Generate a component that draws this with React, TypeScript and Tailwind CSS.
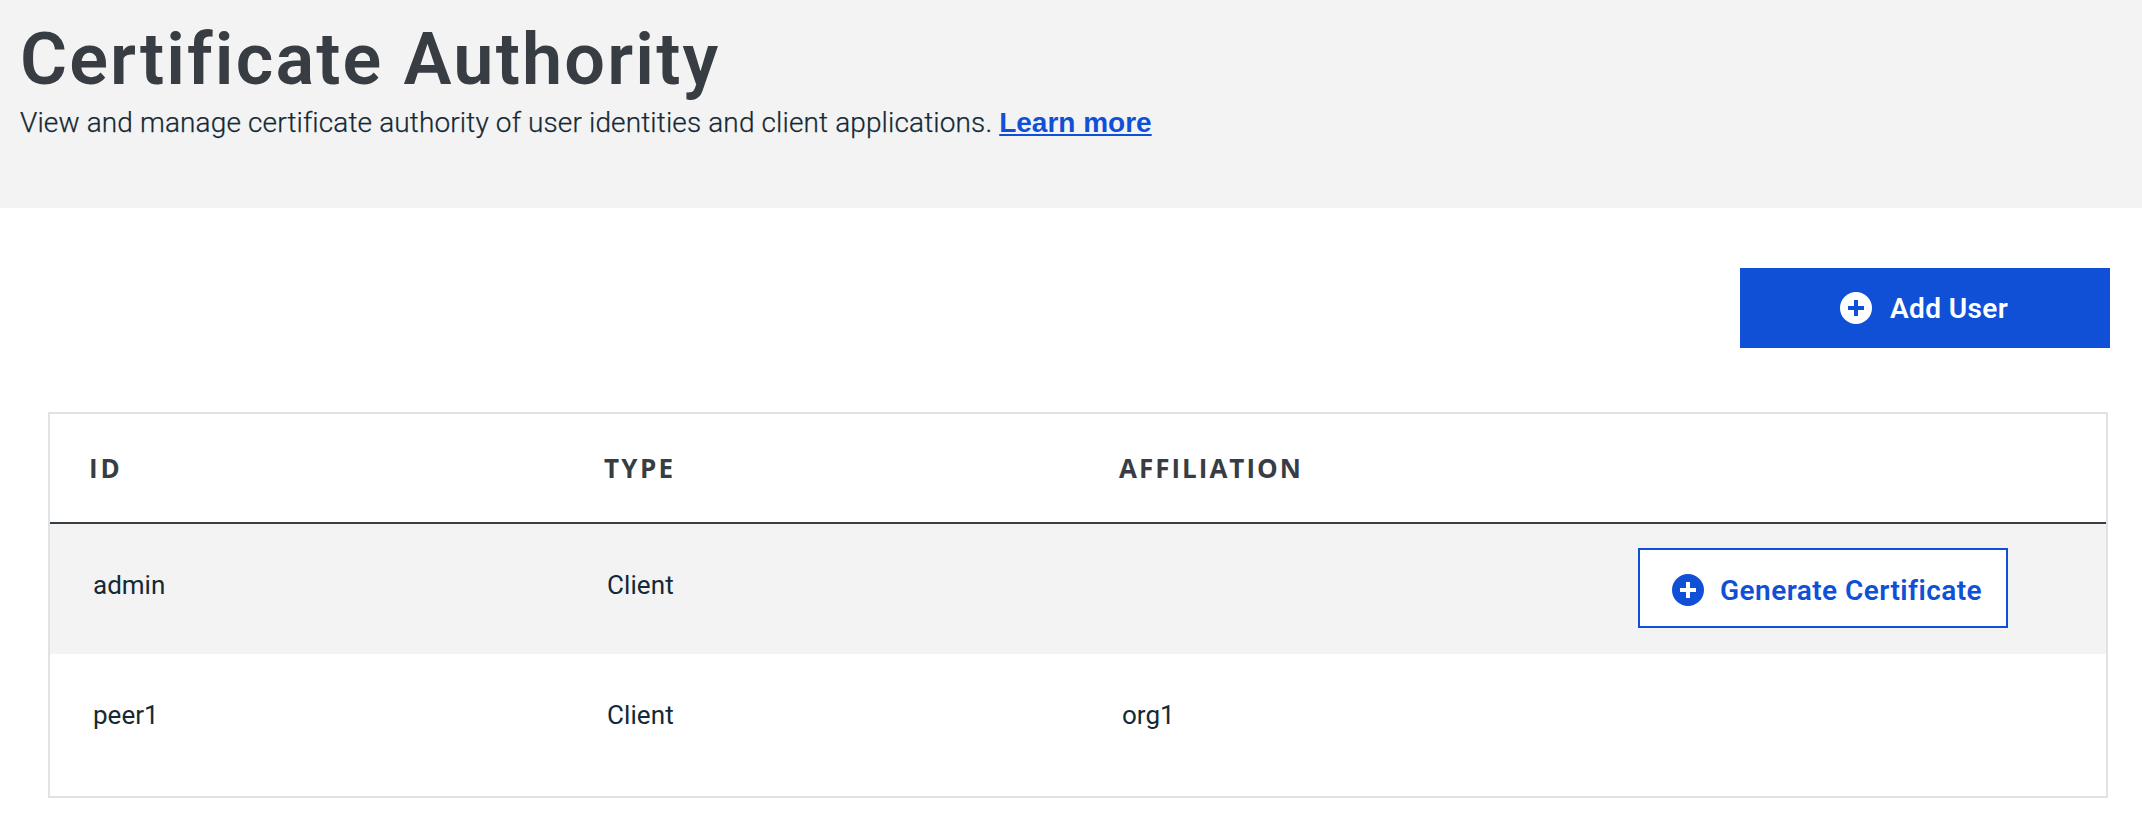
type User = { id: string; type: string; affiliation: string; canGenerate: boolean };

const users: User[] = [
  { id: 'admin', type: 'Client', affiliation: '', canGenerate: true },
  { id: 'peer1', type: 'Client', affiliation: 'org1', canGenerate: false },
];

function PlusIcon() {
  return (
    <svg viewBox="0 0 16 16" className="size-8 shrink-0" fill="currentColor" aria-hidden="true">
      <path
        fillRule="evenodd"
        d="M8 0a8 8 0 1 1 0 16A8 8 0 0 1 8 0ZM7 4v3H4v2h3v3h2V9h3V7H9V4H7Z"
      />
    </svg>
  );
}

export default function App() {
  return (
    <div className="min-h-screen bg-white font-['Roboto',sans-serif] text-[#152934]">
      <header className="h-52 bg-[#f3f3f3] pt-[18px] pl-5">
        <h1 className="text-[72px] leading-[84px] font-semibold tracking-[2.15px] text-[#373d42]">
          Certificate Authority
        </h1>
        <p className="mt-[3px] text-[28px] leading-9 font-light tracking-[0.13px] whitespace-nowrap">
          <span className="[-webkit-text-stroke:0.25px_#152934]">
            View and manage certificate authority of user identities and client applications.
          </span>{' '}
          <a
            href="#"
            className="font-['Liberation_Sans',Arial,sans-serif] font-bold tracking-normal text-[#1050d7] underline decoration-2 underline-offset-2 [text-decoration-skip-ink:none]"
          >
            Learn more
          </a>
        </p>
      </header>

      <main className="pt-[60px] pr-8 pl-12">
        <div className="flex justify-end">
          <button className="flex h-20 w-[370px] items-center bg-[#1050d7] pl-[100px] text-white">
            <PlusIcon />
            <span className="mt-0.5 ml-[18px] text-[28px] leading-10 font-semibold tracking-[0.4px] whitespace-nowrap">
              Add User
            </span>
          </button>
        </div>

        <section className="mt-16 mr-0.5 border-2 border-[#dfe3e6]">
          <div className="grid h-[110px] grid-cols-4 items-center border-b-2 border-[#373d42] font-['Open_Sans',sans-serif] text-[26px] leading-10 font-bold tracking-[2px] text-[#373d42]">
            <div className="pl-[39px] tracking-[3px]">ID</div>
            <div className="pl-10 tracking-[2.3px]">TYPE</div>
            <div className="pl-[41px]">AFFILIATION</div>
            <div />
          </div>
          {users.map((user) => (
            <div
              key={user.id}
              className="grid h-[130px] grid-cols-4 text-[26px] leading-10 last:h-[142px] odd:bg-white even:bg-[#f3f3f3]"
            >
              <div className="pt-[41px] pl-[43px]">{user.id}</div>
              <div className="pt-[41px] pl-[43px] tracking-[0.1px]">{user.type}</div>
              <div className="pt-[41px] pl-11">{user.affiliation}</div>
              <div className="pt-6 pl-[46px]">
                {user.canGenerate && (
                  <button className="flex h-20 w-[370px] items-center border-2 border-[#1050d7] bg-white pt-1 pl-8 text-[#1050d7]">
                    <PlusIcon />
                    <span className="mt-0.5 ml-4 text-[28px] leading-10 font-semibold tracking-[0.45px] whitespace-nowrap">
                      Generate Certificate
                    </span>
                  </button>
                )}
              </div>
            </div>
          ))}
        </section>
      </main>
    </div>
  );
}
